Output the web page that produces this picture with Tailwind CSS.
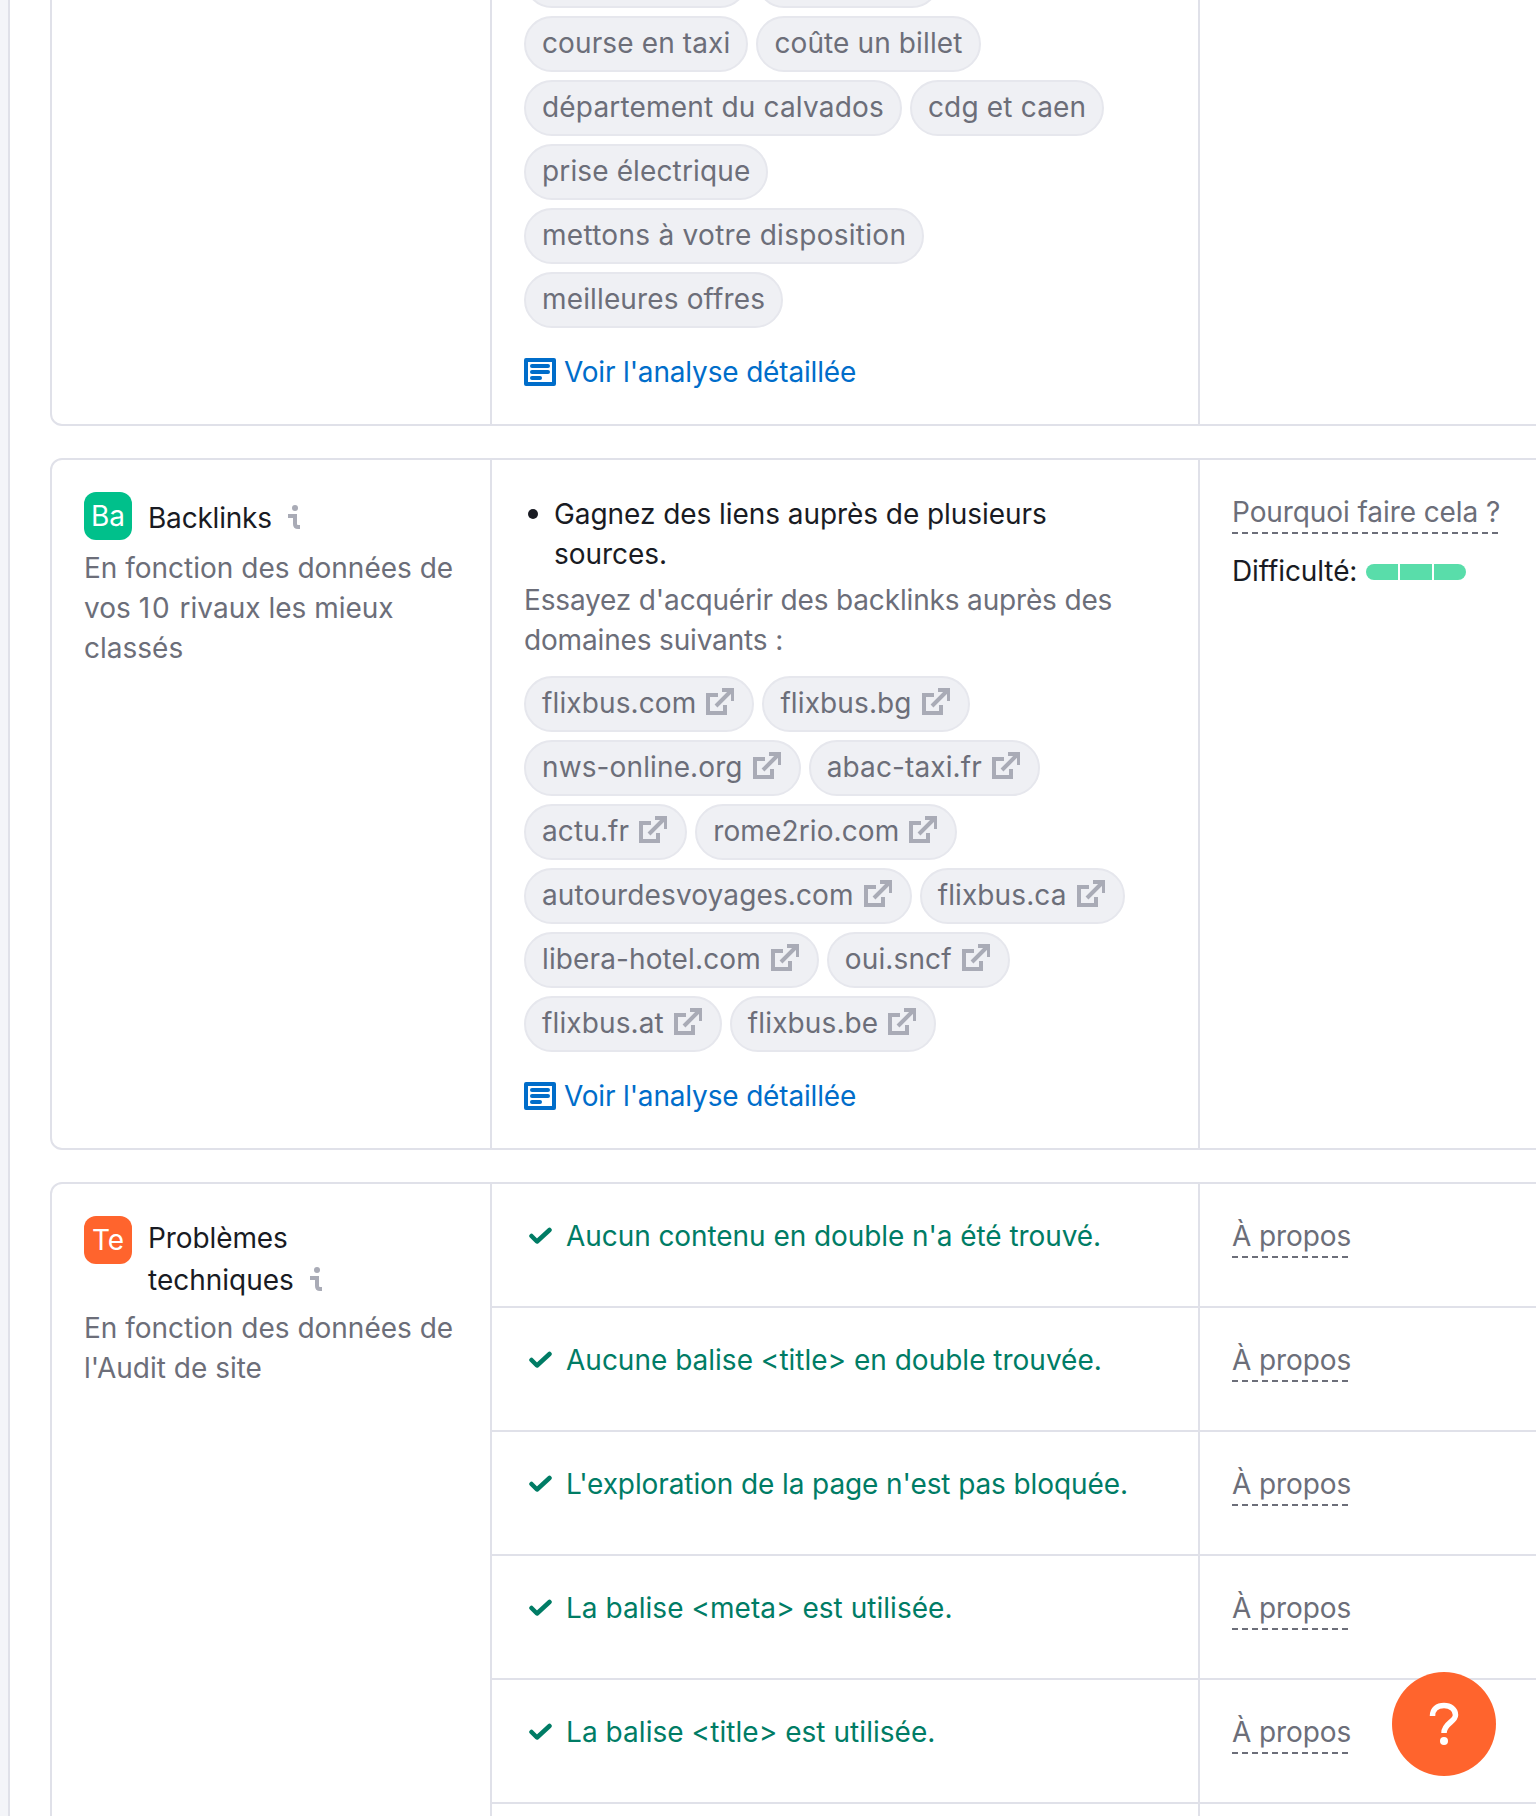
<!doctype html>
<html><head><meta charset="utf-8"><script src="https://cdn.jsdelivr.net/npm/@tailwindcss/browser@4"></script></head>
<body class="bg-white">
<div class="flex h-[1816px] w-[1536px] overflow-hidden bg-white font-['Inter',sans-serif] text-[28px] leading-[40px] text-[#191b23]">
  <div class="h-full w-[10px] shrink-0 border-r-2 border-[#e0e1e9] bg-[#f4f5f9]"></div>
  <main class="-mt-[82px] ml-[40px] flex w-[1600px] shrink-0 flex-col gap-8">

    <!-- Card 1 -->
    <section class="flex rounded-xl border-2 border-[#e0e1e9]">
      <div class="w-[438px] shrink-0"></div>
      <div class="w-[710px] shrink-0 border-x-2 border-[#e0e1e9] p-8">
        <div class="flex gap-2">
          <span class="h-[56px] w-[224px] rounded-[28px] border-2 border-[#e6e7ed] bg-[#eff0f4]"></span>
          <span class="h-[56px] w-[184px] rounded-[28px] border-2 border-[#e6e7ed] bg-[#eff0f4]"></span>
        </div>
        <div class="mt-2 flex flex-wrap gap-2 tracking-[0.12px]">
          <span class="flex h-[56px] items-center rounded-[28px] border-2 border-[#e6e7ed] bg-[#eff0f4] px-4 pb-[2px] text-[#6c6e79]">course en taxi</span>
          <span class="flex h-[56px] items-center rounded-[28px] border-2 border-[#e6e7ed] bg-[#eff0f4] px-4 pb-[2px] text-[#6c6e79]">coûte un billet</span>
        </div>
        <div class="mt-2 flex flex-wrap gap-2 tracking-[0.18px]">
          <span class="flex h-[56px] items-center rounded-[28px] border-2 border-[#e6e7ed] bg-[#eff0f4] px-4 pb-[2px] text-[#6c6e79]">département du calvados</span>
          <span class="flex h-[56px] items-center rounded-[28px] border-2 border-[#e6e7ed] bg-[#eff0f4] px-4 pb-[2px] text-[#6c6e79]">cdg et caen</span>
        </div>
        <div class="mt-2 flex tracking-[0.13px]"><span class="flex h-[56px] items-center rounded-[28px] border-2 border-[#e6e7ed] bg-[#eff0f4] px-4 pb-[2px] text-[#6c6e79]">prise électrique</span></div>
        <div class="mt-2 flex tracking-[0.28px]"><span class="flex h-[56px] items-center rounded-[28px] border-2 border-[#e6e7ed] bg-[#eff0f4] px-4 pb-[2px] text-[#6c6e79]">mettons à votre disposition</span></div>
        <div class="mt-2 flex tracking-[0.14px]"><span class="flex h-[56px] items-center rounded-[28px] border-2 border-[#e6e7ed] bg-[#eff0f4] px-4 pb-[2px] text-[#6c6e79]">meilleures offres</span></div>
        <a class="mt-6 flex items-center gap-[8px] tracking-[-0.17px] text-[#006dca]">
          <svg class="h-[28px] w-[32px] shrink-0" viewBox="0 0 32 28"><path fill="#006dca" fill-rule="evenodd" d="M2 0h28a2 2 0 0 1 2 2v24a2 2 0 0 1-2 2H2a2 2 0 0 1-2-2V2a2 2 0 0 1 2-2Zm2 4v20h24V4Z"/><rect x="6" y="6" width="20" height="4" rx="2" fill="#006dca"/><rect x="6" y="12" width="20" height="4" rx="2" fill="#006dca"/><rect x="6" y="18" width="12" height="4" rx="2" fill="#006dca"/></svg>
          <span>Voir l'analyse détaillée</span>
        </a>
      </div>
      <div class="flex-1"></div>
    </section>

    <!-- Card 2 -->
    <section class="flex rounded-xl border-2 border-[#e0e1e9]">
      <div class="w-[438px] shrink-0 p-8">
        <div class="flex items-start gap-4">
          <span class="flex h-[48px] w-[48px] shrink-0 items-center justify-center rounded-xl bg-[#00c08b] text-white">Ba</span>
          <span class="flex items-center gap-4 pt-[5px] leading-[42px] tracking-[-0.2px]">Backlinks
            <svg class="-mt-[2px] h-[24px] w-[12px]" viewBox="0 0 12 24"><circle cx="7" cy="3" r="3" fill="#a9abb6"/><path fill="none" stroke="#a9abb6" stroke-width="4" d="M0 11h7v8q0 3 3 3h2"/></svg>
          </span>
        </div>
        <div class="mt-2 text-[#6c6e79]">
          <p>En fonction des données de</p>
          <p>vos <span class="tracking-[2px]">10</span> rivaux les mieux</p>
          <p>classés</p>
        </div>
      </div>
      <div class="w-[710px] shrink-0 border-x-2 border-[#e0e1e9] p-8">
        <div class="flex">
          <span class="mt-[17px] ml-[4px] mr-[16px] h-[10px] w-[10px] shrink-0 rounded-full bg-[#191b23]"></span>
          <span class="pt-[2px] tracking-[-0.06px]">Gagnez des liens auprès de plusieurs sources.</span>
        </div>
        <p class="mt-[6px] tracking-[-0.16px] text-[#6c6e79]">Essayez d'acquérir des backlinks auprès des domaines suivants :</p>
        <div class="mt-4 flex flex-wrap gap-2 tracking-[0.12px]">
          <span class="flex h-[56px] items-center gap-[10px] rounded-[28px] border-2 border-[#e6e7ed] bg-[#eff0f4] pb-[2px] pl-4 pr-[18px] text-[#6c6e79]">flixbus.com<svg class="-mt-[2px] h-[28px] w-[28px]" viewBox="0 0 28 28"><path fill="none" stroke="#a9abb6" stroke-width="4" d="M12 7H2v18h17v-8M10 18 25 3M16 2h11v11"/></svg></span>
          <span class="flex h-[56px] items-center gap-[10px] rounded-[28px] border-2 border-[#e6e7ed] bg-[#eff0f4] pb-[2px] pl-4 pr-[18px] text-[#6c6e79]">flixbus.bg<svg class="-mt-[2px] h-[28px] w-[28px]" viewBox="0 0 28 28"><path fill="none" stroke="#a9abb6" stroke-width="4" d="M12 7H2v18h17v-8M10 18 25 3M16 2h11v11"/></svg></span>
          <span class="flex h-[56px] items-center gap-[10px] rounded-[28px] border-2 border-[#e6e7ed] bg-[#eff0f4] pb-[2px] pl-4 pr-[18px] text-[#6c6e79]">nws-online.org<svg class="-mt-[2px] h-[28px] w-[28px]" viewBox="0 0 28 28"><path fill="none" stroke="#a9abb6" stroke-width="4" d="M12 7H2v18h17v-8M10 18 25 3M16 2h11v11"/></svg></span>
          <span class="flex h-[56px] items-center gap-[10px] rounded-[28px] border-2 border-[#e6e7ed] bg-[#eff0f4] pb-[2px] pl-4 pr-[18px] text-[#6c6e79]">abac-taxi.fr<svg class="-mt-[2px] h-[28px] w-[28px]" viewBox="0 0 28 28"><path fill="none" stroke="#a9abb6" stroke-width="4" d="M12 7H2v18h17v-8M10 18 25 3M16 2h11v11"/></svg></span>
          <span class="flex h-[56px] items-center gap-[10px] rounded-[28px] border-2 border-[#e6e7ed] bg-[#eff0f4] pb-[2px] pl-4 pr-[18px] text-[#6c6e79]">actu.fr<svg class="-mt-[2px] h-[28px] w-[28px]" viewBox="0 0 28 28"><path fill="none" stroke="#a9abb6" stroke-width="4" d="M12 7H2v18h17v-8M10 18 25 3M16 2h11v11"/></svg></span>
          <span class="flex h-[56px] items-center gap-[10px] rounded-[28px] border-2 border-[#e6e7ed] bg-[#eff0f4] pb-[2px] pl-4 pr-[18px] text-[#6c6e79]">rome2rio.com<svg class="-mt-[2px] h-[28px] w-[28px]" viewBox="0 0 28 28"><path fill="none" stroke="#a9abb6" stroke-width="4" d="M12 7H2v18h17v-8M10 18 25 3M16 2h11v11"/></svg></span>
          <span class="flex h-[56px] items-center gap-[10px] rounded-[28px] border-2 border-[#e6e7ed] bg-[#eff0f4] pb-[2px] pl-4 pr-[18px] text-[#6c6e79]">autourdesvoyages.com<svg class="-mt-[2px] h-[28px] w-[28px]" viewBox="0 0 28 28"><path fill="none" stroke="#a9abb6" stroke-width="4" d="M12 7H2v18h17v-8M10 18 25 3M16 2h11v11"/></svg></span>
          <span class="flex h-[56px] items-center gap-[10px] rounded-[28px] border-2 border-[#e6e7ed] bg-[#eff0f4] pb-[2px] pl-4 pr-[18px] text-[#6c6e79]">flixbus.ca<svg class="-mt-[2px] h-[28px] w-[28px]" viewBox="0 0 28 28"><path fill="none" stroke="#a9abb6" stroke-width="4" d="M12 7H2v18h17v-8M10 18 25 3M16 2h11v11"/></svg></span>
          <span class="flex h-[56px] items-center gap-[10px] rounded-[28px] border-2 border-[#e6e7ed] bg-[#eff0f4] pb-[2px] pl-4 pr-[18px] text-[#6c6e79]">libera-hotel.com<svg class="-mt-[2px] h-[28px] w-[28px]" viewBox="0 0 28 28"><path fill="none" stroke="#a9abb6" stroke-width="4" d="M12 7H2v18h17v-8M10 18 25 3M16 2h11v11"/></svg></span>
          <span class="flex h-[56px] items-center gap-[10px] rounded-[28px] border-2 border-[#e6e7ed] bg-[#eff0f4] pb-[2px] pl-4 pr-[18px] text-[#6c6e79]">oui.sncf<svg class="-mt-[2px] h-[28px] w-[28px]" viewBox="0 0 28 28"><path fill="none" stroke="#a9abb6" stroke-width="4" d="M12 7H2v18h17v-8M10 18 25 3M16 2h11v11"/></svg></span>
          <span class="flex h-[56px] items-center gap-[10px] rounded-[28px] border-2 border-[#e6e7ed] bg-[#eff0f4] pb-[2px] pl-4 pr-[18px] text-[#6c6e79]">flixbus.at<svg class="-mt-[2px] h-[28px] w-[28px]" viewBox="0 0 28 28"><path fill="none" stroke="#a9abb6" stroke-width="4" d="M12 7H2v18h17v-8M10 18 25 3M16 2h11v11"/></svg></span>
          <span class="flex h-[56px] items-center gap-[10px] rounded-[28px] border-2 border-[#e6e7ed] bg-[#eff0f4] pb-[2px] pl-4 pr-[18px] text-[#6c6e79]">flixbus.be<svg class="-mt-[2px] h-[28px] w-[28px]" viewBox="0 0 28 28"><path fill="none" stroke="#a9abb6" stroke-width="4" d="M12 7H2v18h17v-8M10 18 25 3M16 2h11v11"/></svg></span>
        </div>
        <a class="mt-6 flex items-center gap-[8px] tracking-[-0.17px] text-[#006dca]">
          <svg class="h-[28px] w-[32px] shrink-0" viewBox="0 0 32 28"><path fill="#006dca" fill-rule="evenodd" d="M2 0h28a2 2 0 0 1 2 2v24a2 2 0 0 1-2 2H2a2 2 0 0 1-2-2V2a2 2 0 0 1 2-2Zm2 4v20h24V4Z"/><rect x="6" y="6" width="20" height="4" rx="2" fill="#006dca"/><rect x="6" y="12" width="20" height="4" rx="2" fill="#006dca"/><rect x="6" y="18" width="12" height="4" rx="2" fill="#006dca"/></svg>
          <span>Voir l'analyse détaillée</span>
        </a>
      </div>
      <div class="flex-1 p-8">
        <span class="inline-block bg-[repeating-linear-gradient(to_right,#6c6e79_0,#6c6e79_6px,transparent_6px,transparent_10px)] bg-[length:100%_2px] bg-bottom bg-no-repeat pb-[2px] tracking-[-0.09px] text-[#6c6e79]">Pourquoi faire cela ?</span>
        <div class="mt-[17px] flex items-center gap-[9px] tracking-[-0.1px]">Difficulté:
          <span class="mt-[1px] flex gap-[2px]">
            <span class="h-4 w-8 rounded-l-lg bg-[#59ddaa]"></span>
            <span class="h-4 w-8 bg-[#59ddaa]"></span>
            <span class="h-4 w-8 rounded-r-lg bg-[#59ddaa]"></span>
          </span>
        </div>
      </div>
    </section>

    <!-- Card 3 -->
    <section class="flex rounded-xl border-2 border-[#e0e1e9]">
      <div class="w-[438px] shrink-0 p-8">
        <div class="flex items-start gap-4">
          <span class="flex h-[48px] w-[48px] shrink-0 items-center justify-center rounded-xl bg-[#ff642d] text-white">Te</span>
          <span class="pt-[1px] leading-[42px]"><span class="tracking-[-0.1px]">Problèmes</span><br><span class="flex items-center gap-4">techniques
            <svg class="-mt-[2px] h-[24px] w-[12px]" viewBox="0 0 12 24"><circle cx="7" cy="3" r="3" fill="#a9abb6"/><path fill="none" stroke="#a9abb6" stroke-width="4" d="M0 11h7v8q0 3 3 3h2"/></svg></span>
          </span>
        </div>
        <p class="-mt-[1px] pt-2 text-[#6c6e79]">En fonction des données de l'Audit de site</p>
      </div>
      <div class="flex-1 flex-col">
        <div class="flex h-[124px] border-b-2 border-[#e0e1e9]">
          <div class="flex w-[710px] shrink-0 gap-[14px] border-x-2 border-[#e0e1e9] px-8 pt-8 tracking-[-0.07px] text-[#007c65]"><svg class="mt-[8px] h-[24px] w-[28px] shrink-0" viewBox="0 0 28 24"><path fill="none" stroke="#007c65" stroke-width="4.500" stroke-linecap="round" stroke-linejoin="round" d="M7.500 12l5.500 5.500L25.500 6"/></svg>Aucun contenu en double n'a été trouvé.</div>
          <div class="px-8 pt-8"><span class="inline-block bg-[repeating-linear-gradient(to_right,#6c6e79_0,#6c6e79_6px,transparent_6px,transparent_10px)] bg-[length:100%_2px] bg-bottom bg-no-repeat pb-[2px] tracking-[-0.1px] text-[#6c6e79]">À propos</span></div>
        </div>
        <div class="flex h-[124px] border-b-2 border-[#e0e1e9]">
          <div class="flex w-[710px] shrink-0 gap-[14px] border-x-2 border-[#e0e1e9] px-8 pt-8 text-[#007c65]"><svg class="mt-[8px] h-[24px] w-[28px] shrink-0" viewBox="0 0 28 24"><path fill="none" stroke="#007c65" stroke-width="4.500" stroke-linecap="round" stroke-linejoin="round" d="M7.500 12l5.500 5.500L25.500 6"/></svg>Aucune balise &lt;title&gt; en double trouvée.</div>
          <div class="px-8 pt-8"><span class="inline-block bg-[repeating-linear-gradient(to_right,#6c6e79_0,#6c6e79_6px,transparent_6px,transparent_10px)] bg-[length:100%_2px] bg-bottom bg-no-repeat pb-[2px] tracking-[-0.1px] text-[#6c6e79]">À propos</span></div>
        </div>
        <div class="flex h-[124px] border-b-2 border-[#e0e1e9]">
          <div class="flex w-[710px] shrink-0 gap-[14px] border-x-2 border-[#e0e1e9] px-8 pt-8 tracking-[-0.1px] text-[#007c65]"><svg class="mt-[8px] h-[24px] w-[28px] shrink-0" viewBox="0 0 28 24"><path fill="none" stroke="#007c65" stroke-width="4.500" stroke-linecap="round" stroke-linejoin="round" d="M7.500 12l5.500 5.500L25.500 6"/></svg>L'exploration de la page n'est pas bloquée.</div>
          <div class="px-8 pt-8"><span class="inline-block bg-[repeating-linear-gradient(to_right,#6c6e79_0,#6c6e79_6px,transparent_6px,transparent_10px)] bg-[length:100%_2px] bg-bottom bg-no-repeat pb-[2px] tracking-[-0.1px] text-[#6c6e79]">À propos</span></div>
        </div>
        <div class="flex h-[124px] border-b-2 border-[#e0e1e9]">
          <div class="flex w-[710px] shrink-0 gap-[14px] border-x-2 border-[#e0e1e9] px-8 pt-8 tracking-[0.03px] text-[#007c65]"><svg class="mt-[8px] h-[24px] w-[28px] shrink-0" viewBox="0 0 28 24"><path fill="none" stroke="#007c65" stroke-width="4.500" stroke-linecap="round" stroke-linejoin="round" d="M7.500 12l5.500 5.500L25.500 6"/></svg>La balise &lt;meta&gt; est utilisée.</div>
          <div class="px-8 pt-8"><span class="inline-block bg-[repeating-linear-gradient(to_right,#6c6e79_0,#6c6e79_6px,transparent_6px,transparent_10px)] bg-[length:100%_2px] bg-bottom bg-no-repeat pb-[2px] tracking-[-0.1px] text-[#6c6e79]">À propos</span></div>
        </div>
        <div class="flex h-[124px] border-b-2 border-[#e0e1e9]">
          <div class="flex w-[710px] shrink-0 gap-[14px] border-x-2 border-[#e0e1e9] px-8 pt-8 tracking-[0.05px] text-[#007c65]"><svg class="mt-[8px] h-[24px] w-[28px] shrink-0" viewBox="0 0 28 24"><path fill="none" stroke="#007c65" stroke-width="4.500" stroke-linecap="round" stroke-linejoin="round" d="M7.500 12l5.500 5.500L25.500 6"/></svg>La balise &lt;title&gt; est utilisée.</div>
          <div class="px-8 pt-8"><span class="inline-block bg-[repeating-linear-gradient(to_right,#6c6e79_0,#6c6e79_6px,transparent_6px,transparent_10px)] bg-[length:100%_2px] bg-bottom bg-no-repeat pb-[2px] tracking-[-0.1px] text-[#6c6e79]">À propos</span></div>
        </div>
        <div class="flex h-[124px]"><div class="w-[710px] shrink-0 border-x-2 border-[#e0e1e9]"></div></div>
      </div>
    </section>
  </main>
  <button class="fixed bottom-[40px] left-[1392px] flex h-[104px] w-[104px] items-center justify-center rounded-full bg-[#ff642d]">
    <svg class="h-[44px] w-[30px]" viewBox="0 0 30 44"><path fill="none" stroke="#fff" stroke-width="5.500" d="M3.500 14C3.500 7 8.500 3.500 15 3.500c6.500 0 11.500 4 11.500 9.500 0 7-11.500 8-11.500 18"/><circle cx="15" cy="39" r="4" fill="#fff"/></svg>
  </button>
</div>
</body></html>
